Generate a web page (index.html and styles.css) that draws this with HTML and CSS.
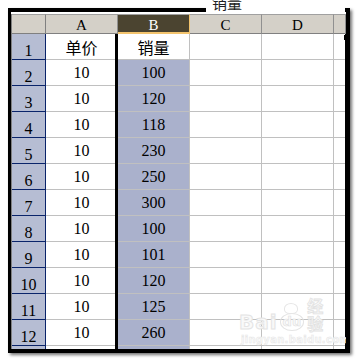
FILE: index.html
```html
<!DOCTYPE html>
<html>
<head>
<meta charset="utf-8">
<link rel="stylesheet" href="styles.css">
</head>
<body>
<div class="formula">销量</div>
<div class="frame">
  <div class="strip"></div>
  <div class="sheet">
    <div class="corner"></div>
    <div class="ch">A</div>
    <div class="ch chsel">B</div>
    <div class="ch">C</div>
    <div class="ch">D</div>
    <div class="ch che"></div>

    <div class="rh">1</div><div class="c zh">单价</div><div class="c active zh">销量</div><div class="c"></div><div class="c"></div><div class="c ce"></div>
    <div class="rh">2</div><div class="c">10</div><div class="c sel">100</div><div class="c"></div><div class="c"></div><div class="c ce"></div>
    <div class="rh">3</div><div class="c">10</div><div class="c sel">120</div><div class="c"></div><div class="c"></div><div class="c ce"></div>
    <div class="rh">4</div><div class="c">10</div><div class="c sel">118</div><div class="c"></div><div class="c"></div><div class="c ce"></div>
    <div class="rh">5</div><div class="c">10</div><div class="c sel">230</div><div class="c"></div><div class="c"></div><div class="c ce"></div>
    <div class="rh">6</div><div class="c">10</div><div class="c sel">250</div><div class="c"></div><div class="c"></div><div class="c ce"></div>
    <div class="rh">7</div><div class="c">10</div><div class="c sel">300</div><div class="c"></div><div class="c"></div><div class="c ce"></div>
    <div class="rh">8</div><div class="c">10</div><div class="c sel">100</div><div class="c"></div><div class="c"></div><div class="c ce"></div>
    <div class="rh">9</div><div class="c">10</div><div class="c sel">101</div><div class="c"></div><div class="c"></div><div class="c ce"></div>
    <div class="rh">10</div><div class="c">10</div><div class="c sel">120</div><div class="c"></div><div class="c"></div><div class="c ce"></div>
    <div class="rh">11</div><div class="c">10</div><div class="c sel">125</div><div class="c"></div><div class="c"></div><div class="c ce"></div>
    <div class="rh">12</div><div class="c">10</div><div class="c sel">260</div><div class="c"></div><div class="c"></div><div class="c ce"></div>
    <div class="rh part"></div><div class="c part"></div><div class="c sel part"></div><div class="c part"></div><div class="c part"></div><div class="c ce part"></div>

    <div class="selection"><span class="handle"></span></div>
  </div>
  <div class="watermark">
    <div class="wm-top">
      <span class="wm-bai">Bai</span><span class="wm-du">du<span class="paw"></span></span><span class="wm-jy">经验</span>
    </div>
    <div class="wm-url">jingyan.baidu.com</div>
  </div>
</div>
</body>
</html>
```
FILE: styles.css
```css
html, body {
  margin: 0;
  padding: 0;
  background: #ffffff;
}
body {
  width: 356px;
  height: 361px;
  overflow: hidden;
  position: relative;
  font-family: "Liberation Serif", "Noto Sans CJK SC", serif;
}
.formula {
  position: absolute;
  left: 206px;
  top: -6px;
  width: 139px;
  height: 18px;
  padding-left: 6px;
  background: #ffffff;
  font-family: "Noto Sans CJK SC", sans-serif;
  font-size: 15px;
  line-height: 18px;
  color: #222;
  z-index: 3;
  box-sizing: border-box;
}
.frame {
  position: relative;
  margin: 8px 0 0 8px;
  width: 342px;
  height: 345px;
  box-sizing: border-box;
  border-top: 4px solid #000;
  border-left: 3px solid #000;
  border-right: 4px solid #000;
  border-bottom: 4px solid #000;
  box-shadow: 2px 2px 3px rgba(0,0,0,0.55);
  overflow: hidden;
  background: #fff;
}
.strip {
  height: 2px;
  background: #fff;
  margin-left: 1px;
}
.sheet {
  position: relative;
  display: grid;
  grid-template-columns: 34px 72px 72px 72px 72px 12px;
  grid-template-rows: 20px repeat(12, 26px) 3px;
  border-left: 1px solid #808080;
}
.sheet > div {
  box-sizing: border-box;
  display: flex;
  align-items: center;
  justify-content: center;
  font-size: 16px;
  color: #000;
  overflow: hidden;
  white-space: nowrap;
}
.corner {
  background: #d4d0c8;
  border-top: 1px solid #a0a0a0;
  border-right: 1px solid #808080;
  border-bottom: 1px solid #808080;
}
.ch {
  background: #d4d0c8;
  border-top: 1px solid #a0a0a0;
  border-right: 1px solid #909090;
  border-bottom: 1px solid #808080;
  font-size: 15px !important;
  padding-top: 3px;
}
.chsel {
  background: #4b4430;
  color: #fff !important;
  border-right: 1px solid #f3c46e;
  border-bottom: 2px solid #f3c46e;
}
.rh {
  background: #b6bdd3;
  border-right: 1px solid #0a246a;
  border-bottom: 1px solid #0a246a;
  align-items: flex-end !important;
  line-height: 17px;
}
.c {
  background: #fff;
  border-right: 1px solid #c0c0c0;
  border-bottom: 1px solid #c0c0c0;
}
.zh {
  font-family: "Noto Sans CJK SC", sans-serif;
}
.sel {
  background: #aab1cc;
}
.active {
  background: #fff;
}
.part {
  border-bottom: 0 !important;
}
.sheet > .selection {
  position: absolute;
  grid-column: 3;
  grid-row: 2 / 15;
  top: 0;
  bottom: 0;
  left: -3px;
  right: -2px;
  border-left: 3px solid #000;
  border-right: 3px solid #000;
  background: transparent;
  overflow: visible;
  z-index: 2;
  pointer-events: none;
}
.handle {
  position: absolute;
  right: -4px;
  top: 1px;
  width: 5px;
  height: 5px;
  background: #000;
}
.watermark {
  position: absolute;
  left: 228px;
  top: 298px;
  width: 95px;
  color: #f9f9f9;
  font-family: "DejaVu Sans", sans-serif;
  z-index: 4;
}
.wm-top {
  display: flex;
  align-items: flex-end;
  height: 22px;
}
.wm-bai {
  font-size: 20px;
  font-weight: bold;
  line-height: 20px;
  -webkit-text-stroke: 1px #e4e4e4;
  letter-spacing: 1px;
}
.wm-du {
  position: relative;
  font-size: 13px;
  font-weight: bold;
  line-height: 14px;
  padding: 1px 2px;
  border-radius: 50%;
  border: 1px solid #e4e4e4;
  margin: 0 3px 1px 2px;
  -webkit-text-stroke: 0.6px #e0e0e0;
}
.paw {
  position: absolute;
  left: 3px;
  top: -11px;
  width: 12px;
  height: 9px;
  border: 1px solid #e6e6e6;
  border-radius: 50% 50% 40% 40%;
}
.wm-jy {
  font-family: "Noto Sans CJK SC", sans-serif;
  font-size: 16px;
  font-weight: bold;
  line-height: 18px;
  -webkit-text-stroke: 0.8px #e2e2e2;
}
.wm-url {
  margin-top: 2px;
  font-size: 10px;
  font-weight: bold;
  letter-spacing: 0.3px;
  line-height: 11px;
  -webkit-text-stroke: 0.5px #e6e6e6;
  padding-left: 2px;
}
```
